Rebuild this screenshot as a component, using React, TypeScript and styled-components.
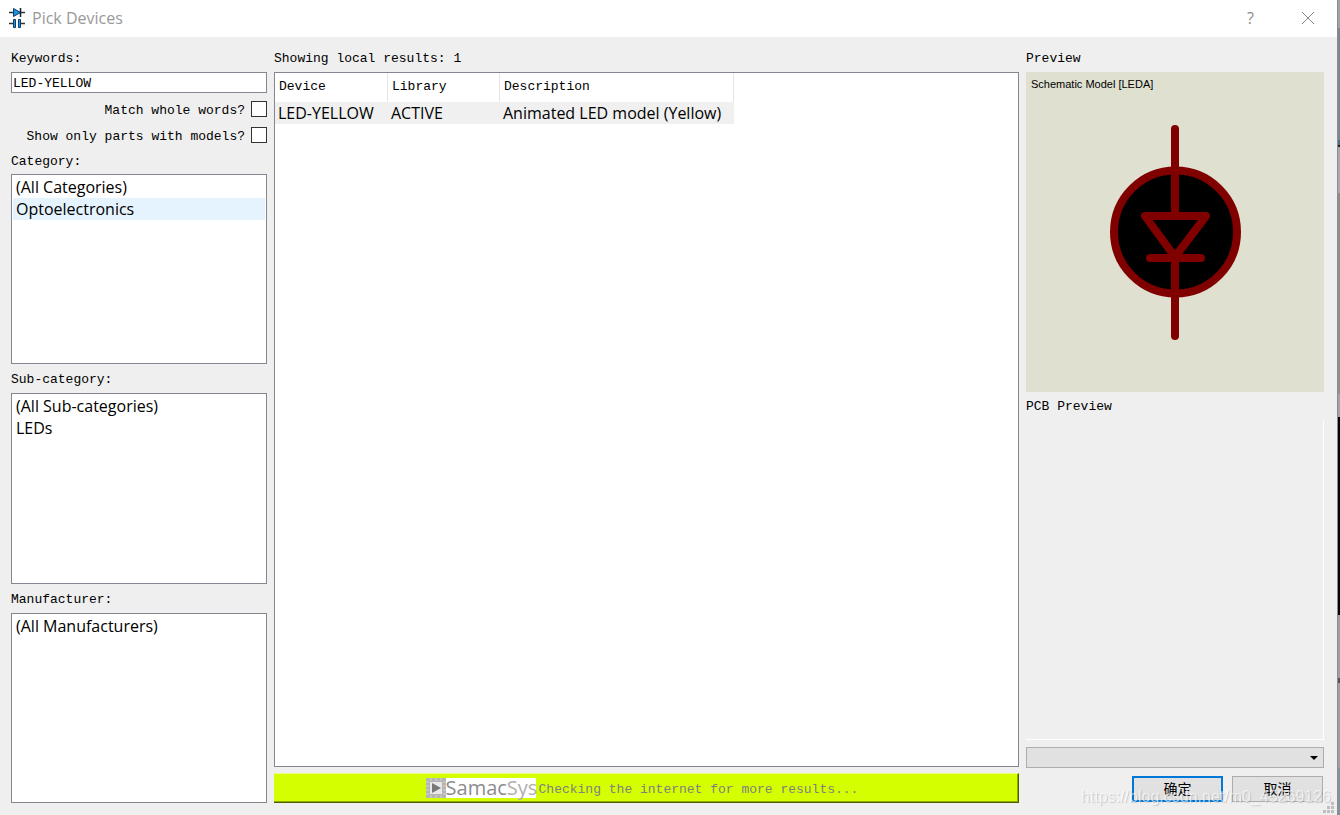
import React from "react";
import styled, { createGlobalStyle } from "styled-components";

const ui = `"Open Sans", "Noto Sans", sans-serif`;
const mono = `"Liberation Mono", "Noto Sans CJK SC", monospace`;

const GlobalStyle = createGlobalStyle`
  *, *::before, *::after { box-sizing: border-box; }
  body { margin: 0; background: #efefef; color: #000; font: 13px/20px ${mono}; }
  button, input, select { font: inherit; color: inherit; border-radius: 0; margin: 0; }
`;

const Screen = styled.div`
  display: flex;
  min-height: 100vh;
`;

const Dialog = styled.div`
  display: flex;
  flex-direction: column;
  flex: 1;
  min-width: 0;
  background: #efefef;
`;

const DesktopEdge = styled.div`
  width: 3px;
  border-left: 1px solid #878d96;
  background: linear-gradient(
    #a0a3a6 0 28px, #7f878c 28px 140px, #4d6f88 140px 145px, #222 145px 147px,
    #a9a9a9 147px 193px, #8f8f84 193px 394px, #a3a3a3 394px 417px,
    #000 417px 615px, #a39d9d 615px 678px, #555 678px 683px, #a39d9d 683px 768px,
    #87919a 768px
  );
`;

const TitleBar = styled.header`
  display: flex;
  align-items: center;
  height: 37px;
  padding: 0 1px 2px 8px;
  gap: 6px;
  background: #fff;
`;

const Title = styled.h1`
  flex: 1;
  margin: 0;
  font: 16px/20px ${ui};
  color: #999;
`;

const Controls = styled.div`
  display: flex;
`;

const TitleButton = styled.button`
  display: grid;
  place-items: center;
  width: 57px;
  height: 34px;
  padding: 0;
  border: 0;
  background: none;
  color: #8c8c8c;
  font-family: ${ui};
  font-size: 16px;
`;

const Content = styled.main`
  display: flex;
  flex: 1;
  gap: 7px;
  padding: 7px 13px 12px 11px;
`;

const Side = styled.section<{ $width: number }>`
  display: flex;
  flex-direction: column;
  flex: none;
  width: ${(p) => p.$width}px;
`;

const Results = styled.section`
  display: flex;
  flex-direction: column;
  flex: 1;
  min-width: 0;
`;

const Label = styled.label<{ $height?: number }>`
  flex: none;
  height: ${(p) => p.$height ?? 28}px;
  line-height: ${(p) => (p.$height ?? 28) + 2}px;
`;

const Caption = styled(Label).attrs({ as: "h2" })`
  margin: 0;
  font-weight: 400;
  font-size: 13px;
`;

const KeywordInput = styled.input`
  height: 21px;
  margin-bottom: 3px;
  padding: 2px 1px 0;
  border: 1px solid #828790;
  background: #fff;
  outline: 0;
`;

const CheckRow = styled.label`
  display: flex;
  align-items: center;
  justify-content: flex-end;
  gap: 6px;
  height: 26px;
  line-height: 24px;
`;

const CheckText = styled.span`
  padding-top: 3px;
`;

const CheckBox = styled.input.attrs({ type: "checkbox" })`
  appearance: none;
  width: 16px;
  height: 16px;
  border: 1px solid #333;
  background: #fff;
  &:checked { background: #333; box-shadow: inset 0 0 0 3px #fff; }
`;

const List = styled.ul`
  flex: 1;
  margin: 0;
  padding: 1px;
  list-style: none;
  border: 1px solid #828790;
  background: #fff;
`;

const Item = styled.li<{ $selected?: boolean }>`
  padding: 0 3px;
  font: 16px/22px ${ui};
  background: ${(p) => (p.$selected ? "#e5f3ff" : "transparent")};
`;

const TableFrame = styled.div`
  flex: 1;
  border: 1px solid #828790;
  background: #fff;
`;

const Table = styled.table`
  width: 459px;
  table-layout: fixed;
  border-collapse: separate;
  border-spacing: 0;
`;

const HeadCell = styled.th<{ $width: number }>`
  width: ${(p) => p.$width}px;
  height: 29px;
  padding: 0 4px 1px;
  border-right: 1px solid #e5e5e5;
  font-weight: 400;
  text-align: left;
`;

const Cell = styled.td`
  height: 22px;
  padding: 0 3px;
  background: #f0f0f0;
  font: 16px/22px ${ui};
  white-space: nowrap;
`;

const SearchButton = styled.button`
  display: flex;
  align-items: center;
  justify-content: center;
  gap: 3px;
  height: 30px;
  margin-top: 6px;
  padding: 0 8px 0 0;
  border: 0;
  border-top: 1px solid #eaff7f;
  border-right: 1px solid #4d5f00;
  border-bottom: 1px solid #4d5f00;
  background: #d4ff00;
  box-shadow: inset -1px -1px #8eaa00;
  color: #808080;
  line-height: 24px;
`;

const SearchText = styled.span`
  padding-top: 3px;
`;

const Logo = styled.span`
  display: flex;
  align-items: center;
  width: 110px;
  height: 20px;
  background: #fff;
  color: #8c8c8c;
  font: 20px/20px ${ui};
`;

const LogoTail = styled.span`
  color: #b0b0b0;
`;

const Schematic = styled.figure`
  display: grid;
  flex: 1;
  margin: 0;
  background: #dfe0d0;
`;

const SchematicName = styled.figcaption`
  grid-area: 1 / 1;
  padding: 2px 5px;
  font: 11px/20px "Liberation Sans", sans-serif;
`;

const Symbol = styled.svg`
  grid-area: 1 / 1;
  place-self: center;
`;

const PcbView = styled.div`
  flex: 1;
  border-right: 1px solid #fff;
  border-bottom: 1px solid #fff;
`;

const PackageWrap = styled.div`
  display: grid;
  align-items: center;
  margin: 7px 0 8px;
`;

const PackageSelect = styled.select`
  grid-area: 1 / 1;
  appearance: none;
  height: 21px;
  border: 1px solid #adadad;
  background: #e1e1e1;
`;

const Arrow = styled.svg`
  grid-area: 1 / 1;
  justify-self: end;
  margin-right: 6px;
  pointer-events: none;
`;

const Actions = styled.div`
  display: flex;
  justify-content: flex-end;
  gap: 9px;
  padding-right: 1px;
`;

const ActionButton = styled.button<{ $primary?: boolean }>`
  width: 91px;
  height: 26px;
  margin-bottom: 1px;
  padding: 0 0 3px;
  border: ${(p) => (p.$primary ? "2px solid #0078d7" : "1px solid #adadad")};
  background: #e1e1e1;
  font: 14px/18px "Noto Sans CJK SC", sans-serif;
`;

const Watermark = styled.span`
  position: fixed;
  right: 9px;
  bottom: 8px;
  font: 16px/20px "Liberation Sans", sans-serif;
  color: rgba(255, 255, 255, 0.6);
  text-shadow: 1px 1px 1px rgba(120, 120, 120, 0.3);
  pointer-events: none;
`;

const Grip = styled.svg`
  position: fixed;
  right: 5px;
  bottom: 1px;
  pointer-events: none;
`;

const AppIcon = () => (
  <svg width="18" height="22" viewBox="0 0 18 22" aria-hidden="true">
    <path d="M1 5.500h16M1 16.500h16" stroke="#333" strokeWidth="1.500" />
    <path d="M5.500 1.500v8l7-4z" fill="#1593e6" stroke="#123c62" />
    <path d="M12.500 1v9" stroke="#123" strokeWidth="1.500" />
    <path d="M8 12h2v9H8z" fill="#fff" />
    <path d="M5.500 12.500h2v8h-2zM10.500 12.500h2v8h-2z" fill="#1593e6" stroke="#123c62" />
  </svg>
);

const CloseIcon = () => (
  <svg width="14" height="14" viewBox="0 0 14 14" aria-hidden="true">
    <path d="M1 1l12 12M13 1L1 13" stroke="#888" fill="none" />
  </svg>
);

const LedSymbol = () => (
  <Symbol width="134" height="218" viewBox="0 0 134 218" role="img" aria-label="LED symbol"
    fill="none" stroke="#800000" strokeWidth="8" strokeLinecap="round" strokeLinejoin="round">
    <circle cx="67.500" cy="109" r="61.500" fill="#000" />
    <path d="M67 6v87M37 93h61L67 134zM42 135h51M67 135v78" />
  </Symbol>
);

const ChipSvg = styled.svg`
  flex: none;
`;

const ChipIcon = () => (
  <ChipSvg width="20" height="20" viewBox="0 0 20 20" aria-hidden="true">
    <path d="M0 0h20v20H0z" fill="#b4b4b4" />
    <path d="M0 4h3M0 8h3M0 12h3M0 16h3M17 4h3M17 8h3M17 12h3M17 16h3M5 0v3M10 0v3M15 0v3M5 17v3M10 17v3M15 17v3" stroke="#d4d4d4" />
    <path d="M4 4h12v12H4z" fill="#e8e8e8" />
    <path d="M6 5v10l9-5z" fill="#777" />
  </ChipSvg>
);

type FilterProps = { label: string; height: number; items: string[]; selected?: string };

const Filter = ({ label, height, items, selected }: FilterProps) => (
  <>
    <Caption $height={height}>{label}</Caption>
    <List aria-label={label}>
      {items.map((item) => (
        <Item key={item} $selected={item === selected}>{item}</Item>
      ))}
    </List>
  </>
);

export default function App() {
  return (
    <Screen>
      <GlobalStyle />
      <Dialog>
        <TitleBar>
          <AppIcon />
          <Title>Pick Devices</Title>
          <Controls>
            <TitleButton type="button" aria-label="Help">?</TitleButton>
            <TitleButton type="button" aria-label="Close"><CloseIcon /></TitleButton>
          </Controls>
        </TitleBar>
        <Content>
          <Side $width={256}>
            <Label htmlFor="keywords">Keywords:</Label>
            <KeywordInput id="keywords" defaultValue="LED-YELLOW" />
            <CheckRow><CheckText>Match whole words?</CheckText><CheckBox /></CheckRow>
            <CheckRow><CheckText>Show only parts with models?</CheckText><CheckBox /></CheckRow>
            <Filter label="Category:" height={26} items={["(All Categories)", "Optoelectronics"]} selected="Optoelectronics" />
            <Filter label="Sub-category:" height={29} items={["(All Sub-categories)", "LEDs"]} />
            <Filter label="Manufacturer:" height={29} items={["(All Manufacturers)"]} />
          </Side>
          <Results>
            <Caption>Showing local results: 1</Caption>
            <TableFrame>
              <Table>
                <thead>
                  <tr>
                    <HeadCell $width={113}>Device</HeadCell>
                    <HeadCell $width={112}>Library</HeadCell>
                    <HeadCell $width={234}>Description</HeadCell>
                  </tr>
                </thead>
                <tbody>
                  <tr>
                    <Cell>LED-YELLOW</Cell>
                    <Cell>ACTIVE</Cell>
                    <Cell>Animated LED model (Yellow)</Cell>
                  </tr>
                </tbody>
              </Table>
            </TableFrame>
            <SearchButton type="button">
              <Logo><ChipIcon />Samac<LogoTail>Sys</LogoTail></Logo>
              <SearchText>Checking the internet for more results...</SearchText>
            </SearchButton>
          </Results>
          <Side $width={298}>
            <Caption>Preview</Caption>
            <Schematic>
              <SchematicName>Schematic Model [LEDA]</SchematicName>
              <LedSymbol />
            </Schematic>
            <Caption>PCB Preview</Caption>
            <PcbView />
            <PackageWrap>
              <PackageSelect aria-label="PCB package"><option></option></PackageSelect>
              <Arrow width="8" height="4" viewBox="0 0 8 4"><path d="M0 0h8L4 4z" /></Arrow>
            </PackageWrap>
            <Actions>
              <ActionButton type="submit" $primary>确定</ActionButton>
              <ActionButton type="button">取消</ActionButton>
            </Actions>
          </Side>
        </Content>
      </Dialog>
      <DesktopEdge />
      <Watermark>https://blog.csdn.net/m0_45269126</Watermark>
      <Grip width="12" height="12" viewBox="0 0 12 12">
        <path d="M8 0h3v3H8zM4 4h3v3H4zM8 4h3v3H8zM0 8h3v3H0zM4 8h3v3H4zM8 8h3v3H8z" fill="#bfbfbf" />
      </Grip>
    </Screen>
  );
}
